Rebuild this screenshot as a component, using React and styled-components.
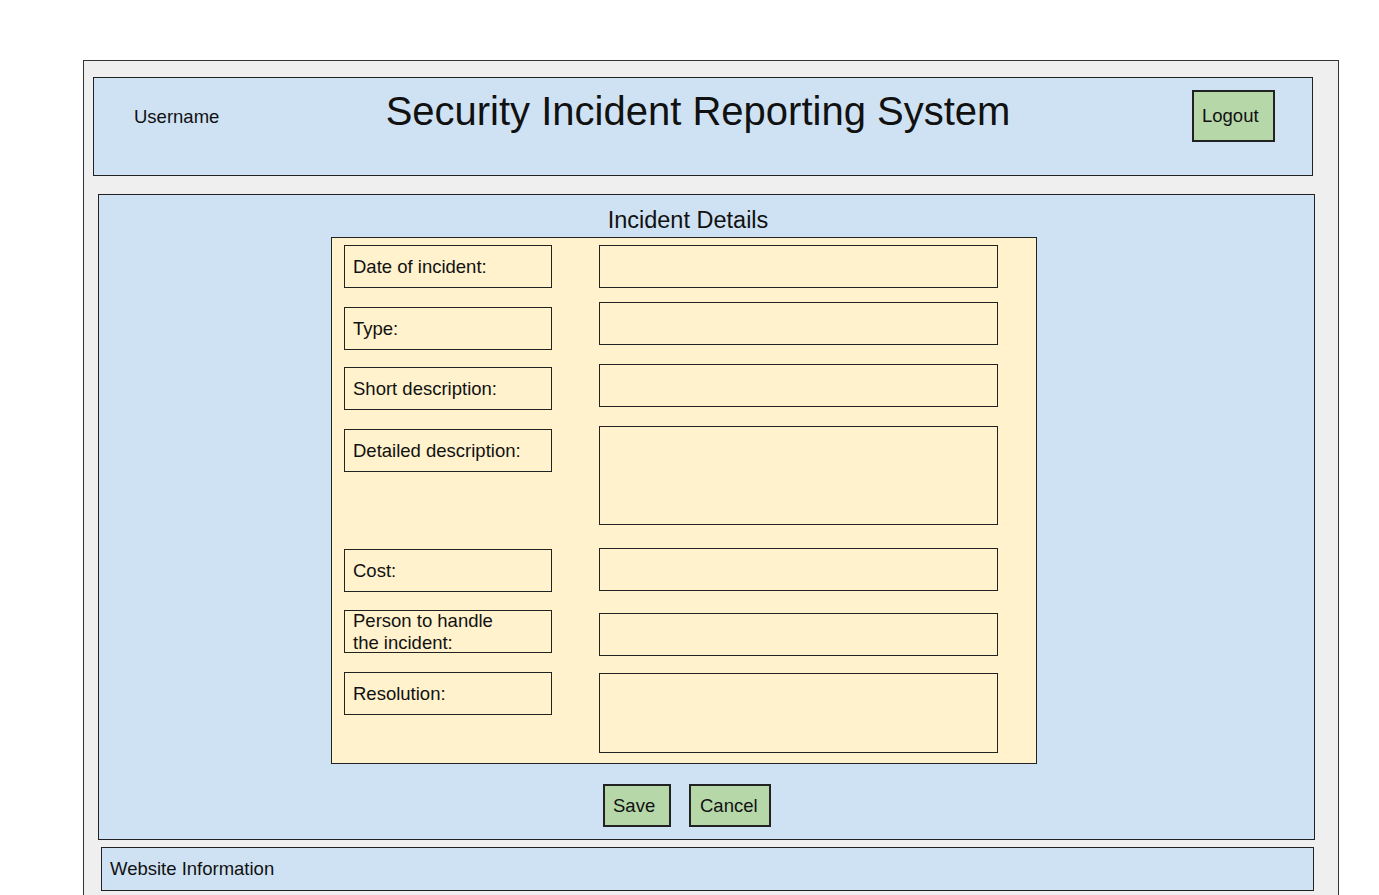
import styled, { createGlobalStyle } from 'styled-components';

const GlobalStyle = createGlobalStyle`
  * { box-sizing: border-box; }
  html, body { margin: 0; padding: 0; background: #fff; }
  body {
    font-family: "Liberation Sans", Arial, sans-serif;
    color: #111;
  }
`;

const Page = styled.div`
  padding: 60px 0 0 83px;
  height: 895px;
  overflow: hidden;
`;

const Frame = styled.div`
  width: 1256px;
  min-height: 900px;
  border: 1px solid #333;
  background: #efefef;
  display: flex;
  flex-direction: column;
`;

const Banner = styled.header`
  margin: 16px 25px 0 9px;
  height: 99px;
  border: 1px solid #222;
  background: #cfe2f3;
  display: grid;
  grid-template-columns: 1fr auto 1fr;
  align-items: start;
  padding: 10px 37px 0 40px;
`;

const Username = styled.div`
  font-size: 18.5px;
  line-height: 22px;
  margin-top: 18px;
`;

const Title = styled.h1`
  margin: 0 13px 0 0;
  font-size: 40px;
  font-weight: 400;
  line-height: 46px;
  white-space: nowrap;
`;

const Button = styled.button`
  appearance: none;
  font-family: inherit;
  font-size: 18.5px;
  color: #111;
  background: #b6d7a8;
  border: 2px solid #222;
  border-radius: 0;
  height: ${({ $h }) => $h || 43}px;
  width: ${({ $w }) => $w}px;
  padding: 0 0 0 ${({ $pl }) => $pl || 0}px;
  display: flex;
  align-items: center;
  justify-content: ${({ $pl }) => ($pl ? 'flex-start' : 'center')};
  cursor: pointer;
`;

const LogoutWrap = styled.div`
  justify-self: end;
  margin-top: 2px;
`;

const Main = styled.main`
  margin: 18px 23px 0 14px;
  height: 646px;
  border: 1px solid #222;
  background: #cfe2f3;
  display: flex;
  flex-direction: column;
  align-items: center;
  padding: 11px 45px 0 0;
`;

const SectionTitle = styled.h2`
  margin: 0 0 3px 8px;
  font-size: 23.5px;
  font-weight: 400;
  line-height: 28px;
`;

const FormPanel = styled.section`
  width: 706px;
  border: 1px solid #222;
  background: #fff2cc;
  padding: 7px 0 10px 12px;
  display: flex;
  flex-direction: column;
`;

const Row = styled.div`
  display: grid;
  grid-template-columns: 208px 399px;
  column-gap: 47px;
  align-items: start;
  margin-top: ${({ $gap }) => $gap || 0}px;
`;

const Label = styled.div`
  height: 43px;
  margin-top: ${({ $offset }) => $offset || 0}px;
  border: 1px solid #222;
  display: flex;
  align-items: center;
  padding-left: 8px;
  font-size: 18.5px;
  line-height: 22px;
  white-space: nowrap;
`;

const Field = styled.div`
  height: ${({ $h }) => $h || 43}px;
  margin-top: ${({ $offset }) => $offset || 0}px;
  border: 1px solid #222;
  background: #fff2cc;
`;

const Actions = styled.div`
  display: flex;
  gap: 18px;
  margin-top: 20px;
  margin-left: 6px;
`;

const Footer = styled.footer`
  margin: 7px 24px 0 17px;
  height: 44px;
  border: 1px solid #222;
  background: #cfe2f3;
  display: flex;
  align-items: center;
  padding-left: 8px;
  font-size: 18.5px;
`;

const rows = [
  { label: 'Date of incident:', gap: 0 },
  { label: 'Type:', gap: 14, labelOffset: 5 },
  { label: 'Short description:', gap: 14, labelOffset: 3 },
  { label: 'Detailed description:', gap: 16, labelOffset: 3, fieldHeight: 99 },
  { label: 'Cost:', gap: 23, labelOffset: 1 },
  { label: ['Person to handle', 'the incident:'], gap: 18, fieldOffset: 3 },
  { label: 'Resolution:', gap: 16, fieldOffset: 1, fieldHeight: 80 },
];

export default function App() {
  return (
    <>
      <GlobalStyle />
      <Page>
        <Frame>
          <Banner>
            <Username>Username</Username>
            <Title>Security Incident Reporting System</Title>
            <LogoutWrap>
              <Button $w={83} $h={52} $pl={8}>Logout</Button>
            </LogoutWrap>
          </Banner>
          <Main>
            <SectionTitle>Incident Details</SectionTitle>
            <FormPanel>
              {rows.map((r, i) => (
                <Row key={i} $gap={r.gap}>
                  <Label $offset={r.labelOffset}>
                    {Array.isArray(r.label) ? (
                      <span>{r.label[0]}<br />{r.label[1]}</span>
                    ) : r.label}
                  </Label>
                  <Field $offset={r.fieldOffset} $h={r.fieldHeight} />
                </Row>
              ))}
            </FormPanel>
            <Actions>
              <Button $w={68} $pl={8}>Save</Button>
              <Button $w={82} $pl={9}>Cancel</Button>
            </Actions>
          </Main>
          <Footer>Website Information</Footer>
        </Frame>
      </Page>
    </>
  );
}
